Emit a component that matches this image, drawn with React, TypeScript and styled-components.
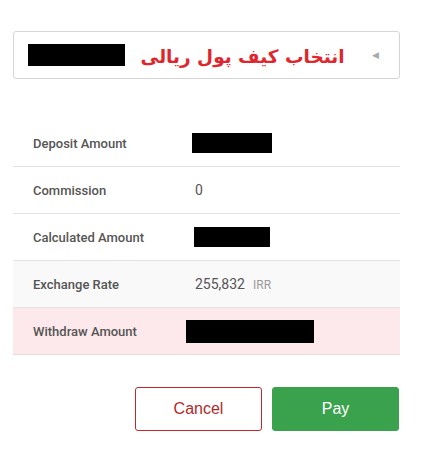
import React from 'react';
import styled, { createGlobalStyle } from 'styled-components';

const Global = createGlobalStyle`
  html, body { margin: 0; padding: 0; background: #fff; }
  body { font-family: Roboto, "Liberation Sans", Arial, sans-serif; }
`;

const Page = styled.div`
  width: 423px;
  height: 451px;
  padding: 31px 23px 0 13px;
  box-sizing: border-box;
`;

const Select = styled.div`
  height: 48px;
  border: 1px solid #d5d5d5;
  border-radius: 3px;
  display: flex;
  align-items: center;
  padding: 0 20px 0 14px;
  box-sizing: border-box;
`;

const Redacted = styled.div<{ $w: number; $h?: number }>`
  width: ${({ $w }) => $w}px;
  height: ${({ $h }) => $h ?? 20}px;
  background: #000;
`;

const Persian = styled.span`
  flex: 1;
  text-align: center;
  direction: rtl;
  white-space: nowrap;
  font-family: "DejaVu Sans", "Noto Sans", sans-serif;
  font-weight: bold;
  font-size: 18.5px;
  color: #e0262c;
  margin: 2px 26px 0 14px;
`;

const Caret = styled.span`
  color: #a9a9a9;
  font-size: 9px;
  font-family: "DejaVu Sans", sans-serif;
`;

const Table = styled.div`
  margin-top: 41px;
`;

const Row = styled.div<{ $bg?: string }>`
  height: 47px;
  display: flex;
  align-items: center;
  padding-left: 20px;
  background: ${({ $bg }) => $bg ?? '#fff'};
  border-bottom: 1px solid #e3e3e3;
  box-sizing: border-box;
  &:last-child { border-bottom-color: #e6dcdc; }
`;

const Label = styled.div`
  width: 162px;
  font-size: 13px;
  font-weight: 500;
  color: #555;
`;

const Value = styled.div<{ $shift?: number }>`
  font-size: 14px;
  color: #555;
  display: flex;
  align-items: baseline;
  gap: 8px;
  margin-left: ${({ $shift }) => $shift ?? 0}px;
`;

const Unit = styled.span`
  font-size: 12px;
  color: #9a9a9a;
`;

const Actions = styled.div`
  margin-top: 32px;
  display: flex;
  justify-content: flex-end;
  gap: 10px;
  padding-right: 1px;
`;

const Button = styled.button<{ $primary?: boolean }>`
  width: 127px;
  height: 44px;
  border-radius: 3px;
  font-family: "Liberation Sans", Arial, sans-serif;
  font-size: 16px;
  cursor: pointer;
  border: 1px solid ${({ $primary }) => ($primary ? '#3aa24c' : '#c0282b')};
  background: ${({ $primary }) => ($primary ? '#3aa24c' : '#fff')};
  color: ${({ $primary }) => ($primary ? '#fff' : '#b02a2d')};
`;

export default function App() {
  return (
    <Page>
      <Global />
      <Select>
        <Redacted $w={97} $h={22} />
        <Persian>انتخاب کیف پول ریالی</Persian>
        <Caret>◀</Caret>
      </Select>
      <Table>
        <Row>
          <Label>Deposit Amount</Label>
          <Value $shift={-3}><Redacted $w={80} /></Value>
        </Row>
        <Row>
          <Label>Commission</Label>
          <Value>0</Value>
        </Row>
        <Row>
          <Label>Calculated Amount</Label>
          <Value $shift={-1}><Redacted $w={76} /></Value>
        </Row>
        <Row $bg="#f9f9f9">
          <Label>Exchange Rate</Label>
          <Value>255,832<Unit>IRR</Unit></Value>
        </Row>
        <Row $bg="#fde9eb">
          <Label>Withdraw Amount</Label>
          <Value $shift={-9}><Redacted $w={128} $h={23} /></Value>
        </Row>
      </Table>
      <Actions>
        <Button>Cancel</Button>
        <Button $primary>Pay</Button>
      </Actions>
    </Page>
  );
}
